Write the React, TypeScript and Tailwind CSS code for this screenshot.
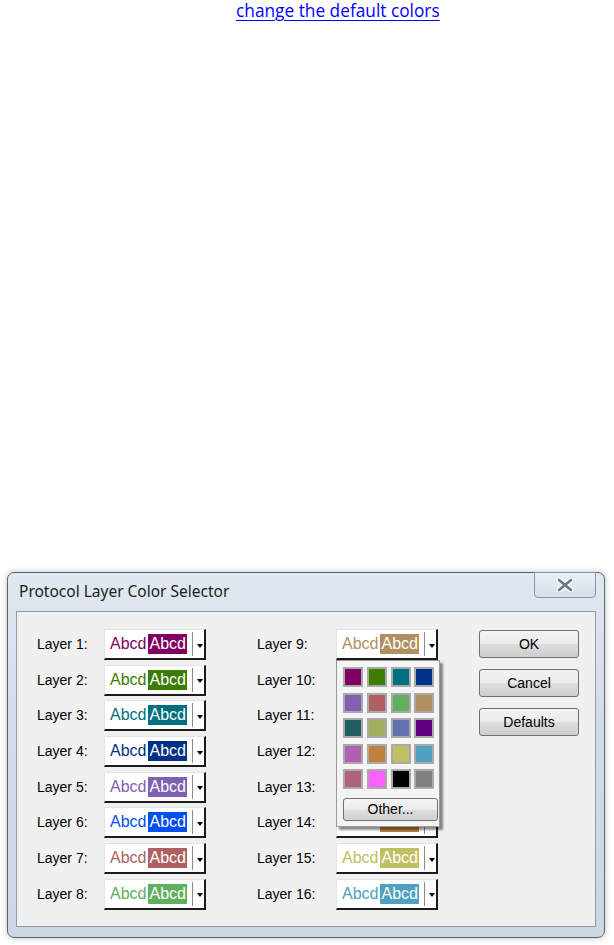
const swatches = [
  "#800060", "#3a7d00", "#007080", "#003088",
  "#8060b0", "#b06060", "#60b060", "#b09060",
  "#206060", "#a0b060", "#6070b0", "#600080",
  "#b060b0", "#c08040", "#c0c060", "#50a0c0",
  "#b06080", "#ff60ff", "#000000", "#808080",
];

const leftLayers = [
  { n: 1, color: "#800060" },
  { n: 2, color: "#3a7d00" },
  { n: 3, color: "#007080" },
  { n: 4, color: "#003088" },
  { n: 5, color: "#8060b0" },
  { n: 6, color: "#0050f0" },
  { n: 7, color: "#b06060" },
  { n: 8, color: "#60b060" },
];

const rightLayers = [
  { n: 9, color: "#b09060" },
  { n: 10, color: "#3a7d00" },
  { n: 11, color: "#007080" },
  { n: 12, color: "#600080" },
  { n: 13, color: "#b06080" },
  { n: 14, color: "#c08040" },
  { n: 15, color: "#c0c060" },
  { n: 16, color: "#50a0c0" },
];

function ColorCombo({ color }: { color: string }) {
  return (
    <div className="flex h-[31px] w-[102px] items-center border-l border-t border-b-2 border-r-2 border-l-[#e4e4e4] border-t-[#e4e4e4] border-b-[#1c1c1c] border-r-[#1c1c1c] bg-white pl-[5px]">
      <span className="text-[16px] leading-[20px]" style={{ color }}>
        Abcd
      </span>
      <span
        className="ml-[2px] h-[20px] px-[1px] text-[16px] leading-[20px] text-white"
        style={{ backgroundColor: color }}
      >
        Abcd
      </span>
      <div className="ml-[5px] h-[24px] w-px bg-[#8a8a8a]" />
      <div className="ml-[4px] mt-[3px] h-0 w-0 border-l-[3px] border-r-[3px] border-t-[4px] border-l-transparent border-r-transparent border-t-black" />
    </div>
  );
}

function ColorPopup() {
  return (
    <div className="absolute left-0 top-[31px] z-10 w-[104px] border border-[#9a9a9a] bg-[#f4f4f4] px-[6px] pb-[5px] pt-[6px] shadow-[3px_3px_2px_rgba(0,0,0,0.45)]">
      <div className="grid grid-cols-4 gap-x-[5px] gap-y-[5.5px]">
        {swatches.map((c, i) => (
          <div
            key={i}
            className="h-[20px] w-[20px] border-2 border-[#a9a9a9]"
            style={{ backgroundColor: c }}
          />
        ))}
      </div>
      <button className="mt-[9px] flex h-[23px] w-[95px] items-center justify-center rounded-[3px] border border-[#707070] bg-[linear-gradient(to_bottom,#f4f4f4_0%,#ececec_50%,#dedede_51%,#d0d0d0_100%)] text-[14px] text-black">
        Other...
      </button>
    </div>
  );
}

function DialogButton({ label }: { label: string }) {
  return (
    <button className="flex h-[28px] w-[100px] items-center justify-center rounded-[3px] border border-[#707070] bg-[linear-gradient(to_bottom,#f2f2f2_0%,#ebebeb_50%,#dddddd_51%,#cfcfcf_100%)] text-[14px] text-black">
      {label}
    </button>
  );
}

export default function App() {
  return (
    <div className="h-[945px] w-[614px] overflow-hidden bg-white font-['Liberation_Sans',Arial,sans-serif]">
      <div className="h-[22px] pl-[236px]">
        <a
          href="#"
          className="font-['Open_Sans',sans-serif] text-[17.3px] leading-[18px] text-[#0000ff] underline underline-offset-[3px]"
        >
          change the default colors
        </a>
      </div>

      <div className="ml-[7px] mt-[550px] flex h-[366px] w-[598px] flex-col rounded-[7px] border border-[#5b626a] bg-[linear-gradient(to_bottom,#e0e8f1_0%,#d3dde9_40%,#ccd7e4_100%)] shadow-[0_0_6px_rgba(0,0,0,0.25)]">
        {/* title bar */}
        <div className="flex h-[38px] justify-between">
          <div className="self-center pl-[11px] font-['Noto_Sans',sans-serif] text-[15.5px] text-[#1e1e1e]">
            Protocol Layer Color Selector
          </div>
          <div className="mr-[8px] -mt-px flex h-[26px] w-[62px] items-center justify-center rounded-b-[4px] border border-[#8796a8] bg-[linear-gradient(to_bottom,#e8eef5,#d6e0eb)]">
            <svg width="18" height="14" viewBox="0 0 18 14">
              <path d="M3 2 L15 12 M15 2 L3 12" stroke="#ffffff" strokeWidth="5" strokeLinecap="round" />
              <path d="M3 2 L15 12 M15 2 L3 12" stroke="#6a7684" strokeWidth="2.6" strokeLinecap="round" />
            </svg>
          </div>
        </div>

        {/* client area */}
        <div className="ml-[8px] flex h-[316px] w-[580px] border border-[#8f9aa6] bg-[#f0f0f0] pl-[20px] pt-[17px]">
          <div className="flex flex-col gap-[4.7px]">
            {leftLayers.map((l) => (
              <div key={l.n} className="flex items-center">
                <span className="w-[67px] text-[14px] text-black">Layer {l.n}:</span>
                <ColorCombo color={l.color} />
              </div>
            ))}
          </div>

          <div className="ml-[51px] flex flex-col gap-[4.7px]">
            {rightLayers.map((l) => (
              <div key={l.n} className="flex items-center">
                <span className="w-[79px] text-[14px] text-black">Layer {l.n}:</span>
                <div className="relative">
                  <ColorCombo color={l.color} />
                  {l.n === 9 && <ColorPopup />}
                </div>
              </div>
            ))}
          </div>

          <div className="ml-[41px] flex flex-col gap-[11px] pt-px">
            <DialogButton label="OK" />
            <DialogButton label="Cancel" />
            <DialogButton label="Defaults" />
          </div>
        </div>
      </div>
    </div>
  );
}
